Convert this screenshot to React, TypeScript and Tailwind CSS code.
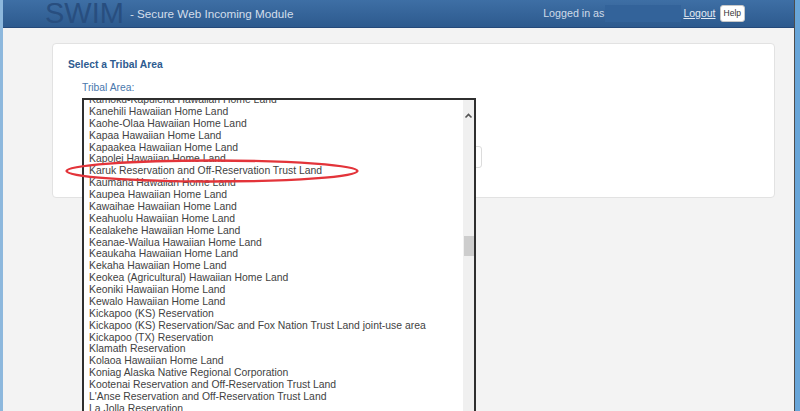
const areas = [
  'Kamoku-Kapulena Hawaiian Home Land',
  'Kanehili Hawaiian Home Land',
  'Kaohe-Olaa Hawaiian Home Land',
  'Kapaa Hawaiian Home Land',
  'Kapaakea Hawaiian Home Land',
  'Kapolei Hawaiian Home Land',
  'Karuk Reservation and Off-Reservation Trust Land',
  'Kaumana Hawaiian Home Land',
  'Kaupea Hawaiian Home Land',
  'Kawaihae Hawaiian Home Land',
  'Keahuolu Hawaiian Home Land',
  'Kealakehe Hawaiian Home Land',
  'Keanae-Wailua Hawaiian Home Land',
  'Keaukaha Hawaiian Home Land',
  'Kekaha Hawaiian Home Land',
  'Keokea (Agricultural) Hawaiian Home Land',
  'Keoniki Hawaiian Home Land',
  'Kewalo Hawaiian Home Land',
  'Kickapoo (KS) Reservation',
  'Kickapoo (KS) Reservation/Sac and Fox Nation Trust Land joint-use area',
  'Kickapoo (TX) Reservation',
  'Klamath Reservation',
  'Kolaoa Hawaiian Home Land',
  'Koniag Alaska Native Regional Corporation',
  'Kootenai Reservation and Off-Reservation Trust Land',
  "L'Anse Reservation and Off-Reservation Trust Land",
  'La Jolla Reservation',
  'La Posta Reservation',
  'Lac Courte Oreilles Reservation and Off-Reservation Trust Land',
];

function TribalList() {
  return (
    <div className="absolute left-[14px] top-0 z-10 flex h-[330px] w-[394px] overflow-hidden border-2 border-[#2f2f2f] bg-white">
      <div className="flex-1 overflow-hidden pl-[5px]">
        <div className="-mt-[6px]">
          {areas.map((a) => (
            <div key={a} className="whitespace-nowrap text-[10.4px] leading-[11.88px] text-[#424242]">
              {a}
            </div>
          ))}
        </div>
      </div>
      <div className="relative w-[11px] bg-[#f0f0f0]">
        <svg width="11" height="8" viewBox="0 0 11 8" className="mt-[12px]">
          <path d="M2.5 5.5 L5.5 2.5 L8.5 5.5" fill="none" stroke="#555" strokeWidth="1.6" />
        </svg>
        <div className="absolute left-[1px] top-[136px] h-[20px] w-[10px] bg-[#cdcdcd]" />
      </div>
    </div>
  );
}

export default function App() {
  return (
    <div className="relative flex h-[411px] w-[800px] overflow-hidden font-['Liberation_Sans',Arial,sans-serif]">
      <div className="w-[3px] bg-[#8db8dd]" />
      <div className="flex flex-1 flex-col border-r border-[#4d4d4d] bg-[#f3f3f3]">
        <header className="flex h-[28px] items-center border-b border-[#24497a] bg-linear-to-b from-[#3e6fa5] to-[#2d5a8e] pl-[42px]">
          <span className="h-[27px] text-[29px] leading-[27px] text-[#284e7f]">SWIM</span>
          <span className="ml-[6px] text-[11.7px] text-[#d3deeb]">- Secure Web Incoming Module</span>
          <div className="flex-1" />
          <span className="text-[10.7px] text-[#cfdbe9]">Logged in as</span>
          <div className="ml-[1px] h-[17px] w-[76px] bg-[#33639a]" />
          <a className="ml-[2px] text-[10.5px] text-[#e4ebf3] underline">Logout</a>
          <button className="ml-[4px] mr-[49px] h-[17px] rounded-[3px] border border-[#c8c8c8] bg-white px-[3px] text-[8.5px] text-[#333]">
            Help
          </button>
        </header>
        <main className="pl-[49px] pr-[19px] pt-[15px]">
          <div className="h-[155px] rounded-[4px] border border-[#e2e2e2] bg-white pl-[15px] pt-[15px]">
            <h2 className="text-[10.3px] font-bold leading-[12px] text-[#2d5b90]">Select a Tribal Area</h2>
            <label className="ml-[14px] mt-[11px] block text-[10.3px] leading-[12px] text-[#4a78ad]">Tribal Area:</label>
            <div className="relative mt-[4px]">
              <div className="ml-[14px] h-[22px] w-[394px] rounded-[3px] border border-[#ccc]" />
              <div className="ml-[314px] mt-[26px] h-[22px] w-[100px] rounded-[3px] border border-[#dcdcdc] bg-white" />
              <TribalList />
            </div>
          </div>
        </main>
      </div>
      <div className="w-[5px] bg-[#68a5d8]" />
      <svg className="pointer-events-none absolute left-[60px] top-[155px] z-20" width="310" height="35">
        <ellipse cx="152" cy="16" rx="145.5" ry="10.5" fill="none" stroke="#e3343a" strokeWidth="2.4" />
      </svg>
    </div>
  );
}
